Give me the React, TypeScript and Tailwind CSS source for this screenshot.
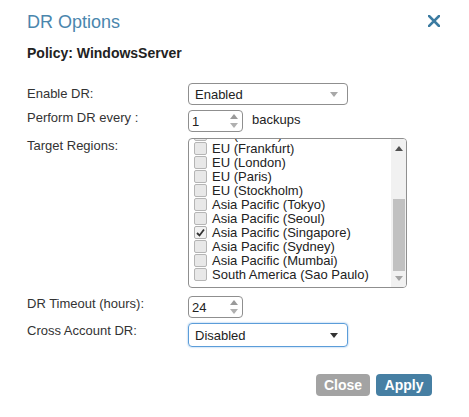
import React from "react";

const regions: { name: string; checked?: boolean }[] = [
  { name: "EU (Ireland)" },
  { name: "EU (Frankfurt)" },
  { name: "EU (London)" },
  { name: "EU (Paris)" },
  { name: "EU (Stockholm)" },
  { name: "Asia Pacific (Tokyo)" },
  { name: "Asia Pacific (Seoul)" },
  { name: "Asia Pacific (Singapore)", checked: true },
  { name: "Asia Pacific (Sydney)" },
  { name: "Asia Pacific (Mumbai)" },
  { name: "South America (Sao Paulo)" },
];

function Tri({ up, color }: { up?: boolean; color: string }) {
  return (
    <svg width="8" height="5" viewBox="0 0 8 5">
      {up ? <polygon points="0,5 8,5 4,0" fill={color} /> : <polygon points="0,0 8,0 4,5" fill={color} />}
    </svg>
  );
}

function SelectBox({ value, focused, arrow }: { value: string; focused?: boolean; arrow: string }) {
  return (
    <div
      className={
        focused
          ? "w-[160px] h-[24px] rounded-[4px] border border-[#5b9dd9] shadow-[0_0_2px_#7fb3e6] flex items-center justify-between pl-[6px] pr-[9px]"
          : "w-[160px] h-[22px] rounded-[4px] border border-[#8f8f8f] flex items-center justify-between pl-[6px] pr-[9px]"
      }
    >
      <span className="text-[#222]">{value}</span>
      <Tri color={arrow} />
    </div>
  );
}

function NumberBox({ value }: { value: string }) {
  return (
    <div className="w-[55px] h-[22px] rounded-[4px] border border-[#8f8f8f] flex items-center justify-between pl-[3px] pr-[4px]">
      <span className="text-[#222]">{value}</span>
      <div className="flex flex-col gap-[4px]">
        <Tri up color="#9a9a9a" />
        <Tri color="#b0b0b0" />
      </div>
    </div>
  );
}

function Checkbox({ checked }: { checked?: boolean }) {
  return (
    <div
      className={
        checked
          ? "w-[13px] h-[13px] rounded-[2px] border border-[#b0b0b0] bg-[#f2f2f2] flex items-center justify-center"
          : "w-[13px] h-[13px] rounded-[2px] border border-[#b5b5b5] bg-[#e8e8e8]"
      }
    >
      {checked && (
        <svg width="9" height="9" viewBox="0 0 9 9">
          <path d="M1 5 L3.5 7.5 L8 1.5" stroke="#333" strokeWidth="1.8" fill="none" />
        </svg>
      )}
    </div>
  );
}

export default function App() {
  return (
    <div className="w-[469px] h-[417px] bg-white text-[#333] font-['Liberation_Sans',Arial,sans-serif] text-[13px] leading-[15px]">
      <div className="flex items-start justify-between pl-[27px] pr-[29px] pt-[11px]">
        <h1 className="text-[18px] leading-[22px] text-[#4a86ad]">DR Options</h1>
        <svg width="12" height="12" viewBox="0 0 12 12" className="mt-[4px]">
          <path d="M1 1 L11 11 M11 1 L1 11" stroke="#3c7ba1" strokeWidth="2.6" strokeLinecap="square" />
        </svg>
      </div>
      <div className="pl-[27px] mt-[13px] font-bold text-[14px] text-[#222]">Policy: WindowsServer</div>

      <div className="pl-[27px] mt-[22px] flex flex-col">
        <div className="flex items-start">
          <label className="w-[161px] shrink-0 pt-[3px]">Enable DR:</label>
          <SelectBox value="Enabled" arrow="#a8a8a8" />
        </div>
        <div className="flex items-start mt-[5px]">
          <label className="w-[161px] shrink-0 pt-[0px]">Perform DR every :</label>
          <NumberBox value="1" />
          <span className="ml-[9px] pt-[2px] text-[#222]">backups</span>
        </div>
        <div className="flex items-start mt-[6px]">
          <label className="w-[161px] shrink-0 pt-[0px]">Target Regions:</label>
          <div className="w-[219px] h-[150px] rounded-[4px] border border-[#8f8f8f] flex overflow-hidden">
            <div className="flex-1 overflow-hidden">
              <div className="mt-[-12px] flex flex-col">
                {regions.map((r) => (
                  <div key={r.name} className="h-[14px] flex items-center pl-[5px] gap-[5px] text-[#222] whitespace-nowrap">
                    <Checkbox checked={r.checked} />
                    <span>{r.name}</span>
                  </div>
                ))}
              </div>
            </div>
            <div className="w-[15px] bg-[#f1f1f1] flex flex-col items-center">
              <div className="h-[15px] flex items-center justify-center mt-[2px]">
                <Tri up color="#505050" />
              </div>
              <div className="mt-[43px] w-[12px] h-[72px] bg-[#c1c1c1]" />
              <div className="h-[15px] flex items-center justify-center">
                <Tri color="#a3a3a3" />
              </div>
            </div>
          </div>
        </div>
        <div className="flex items-start mt-[8px]">
          <label className="w-[161px] shrink-0 pt-[0px]">DR Timeout (hours):</label>
          <NumberBox value="24" />
        </div>
        <div className="flex items-start mt-[5px]">
          <label className="w-[161px] shrink-0 pt-[0px]">Cross Account DR:</label>
          <SelectBox value="Disabled" arrow="#333" focused />
        </div>
      </div>

      <div className="flex justify-end gap-[6px] pr-[37px] mt-[27px]">
        <button className="w-[54px] h-[22px] rounded-[4px] bg-[#a3a3a3] text-white font-bold text-[14px] leading-[22px]">Close</button>
        <button className="w-[56px] h-[22px] rounded-[4px] bg-[#467fa3] text-white font-bold text-[14px] leading-[22px]">Apply</button>
      </div>
    </div>
  );
}
